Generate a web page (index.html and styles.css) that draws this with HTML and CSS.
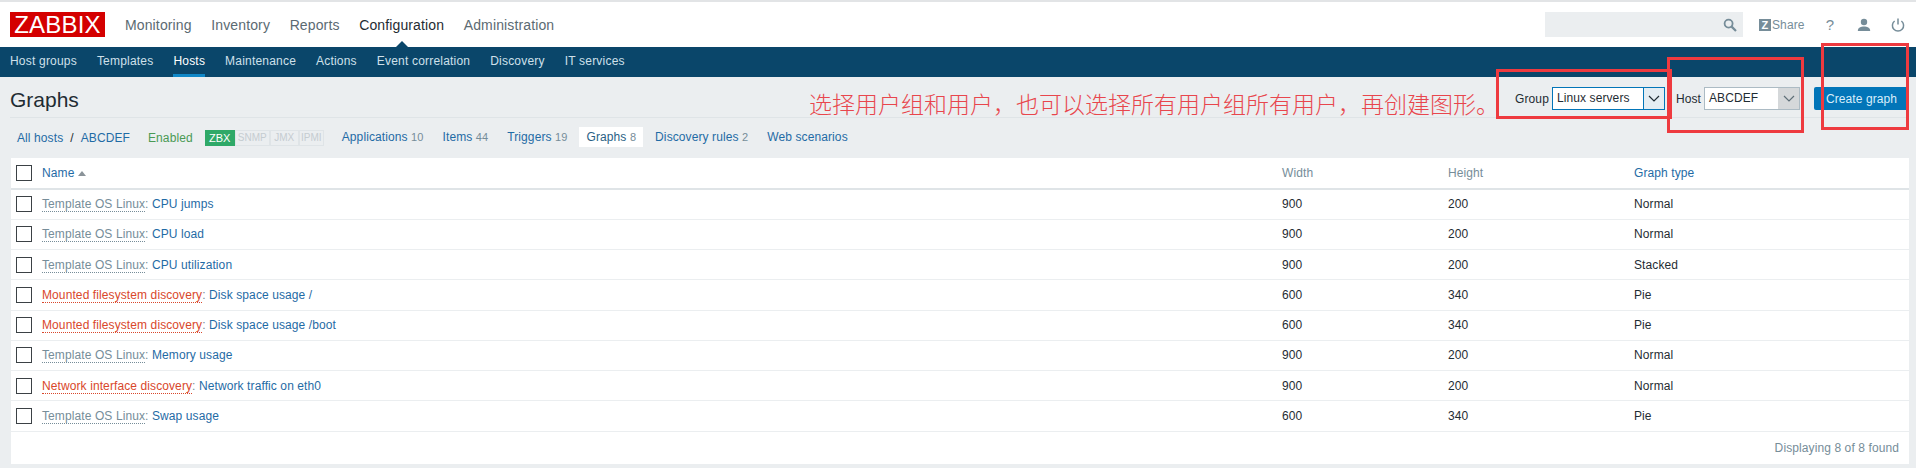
FILE: index.html
```html
<!DOCTYPE html>
<html lang="en">
<head>
<meta charset="utf-8">
<title>Graphs</title>
<link rel="stylesheet" href="styles.css">
</head>
<body>
<header class="topbar">
  <div class="logo">ZABBIX</div>
  <nav class="mainnav">
    <a>Monitoring</a><a>Inventory</a><a>Reports</a><a class="active">Configuration</a><a>Administration</a>
  </nav>
  <div class="search">
    <svg class="search-icon" viewBox="0 0 14 14" width="14" height="14"><circle cx="5.6" cy="5.6" r="4" fill="none" stroke="#768d99" stroke-width="1.8"/><path d="M8.6 8.6 L13 13" stroke="#768d99" stroke-width="2.2" fill="none"/></svg>
  </div>
  <a class="share"><span class="share-z">Z</span>Share</a>
  <span class="help">?</span>
  <svg class="tool user" viewBox="0 0 14 14" width="14" height="14"><circle cx="7" cy="4" r="3.2" fill="#768d99"/><path d="M0.8 13 C0.8 9.2 4 8.4 7 8.4 C10 8.4 13.2 9.2 13.2 13 Z" fill="#768d99"/></svg>
  <svg class="tool power" viewBox="0 0 14 14" width="14" height="14"><path d="M3.6 3 A5.6 5.6 0 1 0 10.4 3" fill="none" stroke="#768d99" stroke-width="1.5"/><path d="M7 0.5 V6.5" stroke="#768d99" stroke-width="1.5"/></svg>
</header>
<nav class="subnav">
  <a>Host groups</a><a>Templates</a><a class="active">Hosts</a><a>Maintenance</a><a>Actions</a><a>Event correlation</a><a>Discovery</a><a>IT services</a>
</nav>
<main>
  <div class="titlebar">
    <h1>Graphs</h1>
    <form class="controls">
      <label>Group</label>
      <div class="select group"><span>Linux servers</span><i class="arrow"><svg viewBox="0 0 12 7" width="12" height="7"><path d="M1 1 L6 6 L11 1" fill="none" stroke="#1f2c33" stroke-width="1.2"/></svg></i></div>
      <label class="host-label">Host</label>
      <div class="select host"><span>ABCDEF</span><i class="arrow"><svg viewBox="0 0 12 7" width="12" height="7"><path d="M1 1 L6 6 L11 1" fill="none" stroke="#5f6f78" stroke-width="1.2"/></svg></i></div>
      <button type="button" class="create">Create graph</button>
    </form>
  </div>
  <div class="hostnav">
    <a>All hosts</a><span class="sep">/</span><a>ABCDEF</a>
    <span class="enabled">Enabled</span>
    <div class="tags"><b class="on">ZBX</b><b class="snmp">SNMP</b><b class="jmx">JMX</b><b class="ipmi">IPMI</b></div>
    <a class="tab">Applications <small>10</small></a>
    <a class="tab">Items <small>44</small></a>
    <a class="tab">Triggers <small>19</small></a>
    <a class="tab current">Graphs <small>8</small></a>
    <a class="tab">Discovery rules <small>2</small></a>
    <a class="tab">Web scenarios</a>
  </div>
  <section class="panel">
    <table>
      <colgroup><col class="c-check"><col class="c-name"><col class="c-width"><col class="c-height"><col></colgroup>
      <thead>
        <tr><th><i class="box"></i></th><th><a>Name</a><i class="sort"></i></th><th>Width</th><th>Height</th><th><a>Graph type</a></th></tr>
      </thead>
      <tbody>
        <tr><td><i class="box"></i></td><td><a class="tpl">Template OS Linux</a>: <a>CPU jumps</a></td><td>900</td><td>200</td><td>Normal</td></tr>
        <tr><td><i class="box"></i></td><td><a class="tpl">Template OS Linux</a>: <a>CPU load</a></td><td>900</td><td>200</td><td>Normal</td></tr>
        <tr><td><i class="box"></i></td><td><a class="tpl">Template OS Linux</a>: <a>CPU utilization</a></td><td>900</td><td>200</td><td>Stacked</td></tr>
        <tr><td><i class="box"></i></td><td><a class="lld">Mounted filesystem discovery</a>: <a>Disk space usage /</a></td><td>600</td><td>340</td><td>Pie</td></tr>
        <tr><td><i class="box"></i></td><td><a class="lld">Mounted filesystem discovery</a>: <a>Disk space usage /boot</a></td><td>600</td><td>340</td><td>Pie</td></tr>
        <tr><td><i class="box"></i></td><td><a class="tpl">Template OS Linux</a>: <a>Memory usage</a></td><td>900</td><td>200</td><td>Normal</td></tr>
        <tr><td><i class="box"></i></td><td><a class="lld">Network interface discovery</a>: <a>Network traffic on eth0</a></td><td>900</td><td>200</td><td>Normal</td></tr>
        <tr><td><i class="box"></i></td><td><a class="tpl">Template OS Linux</a>: <a>Swap usage</a></td><td>600</td><td>340</td><td>Pie</td></tr>
      </tbody>
    </table>
    <div class="paging">Displaying 8 of 8 found</div>
  </section>
</main>
<div class="note">选择用户组和用户，也可以选择所有用户组所有用户，再创建图形。</div>
<div class="mark mark-group"></div>
<div class="mark mark-host"></div>
<div class="mark mark-create"></div>
</body>
</html>
```
FILE: styles.css
```css
* { box-sizing: border-box; }
html, body { margin: 0; height: 468px; overflow: hidden; }
body {
  background: #ebeef0;
  color: #1f2c33;
  font: 12px "Liberation Sans", Arial, sans-serif;
  letter-spacing: 0.1px;
  position: relative;
}
a { color: #1f6ba5; }

.topbar {
  height: 47px;
  background: #fff;
  border-top: 2px solid #e2e4e6;
  display: flex;
  align-items: center;
  padding: 0 11px 0 10px;
}
.logo {
  width: 95px;
  height: 25px;
  background: #d40000;
  color: #fff;
  font-size: 24px;
  line-height: 25px;
  text-align: center;
  letter-spacing: 0.2px;
}
.mainnav { display: flex; margin-left: 20px; flex: 1; gap: 19.6px; font-size: 14px; letter-spacing: 0.13px; }
.mainnav a { color: #5b6a72; position: relative; }
.mainnav a.active { color: #1f2c33; }
.mainnav a.active::after {
  content: "";
  position: absolute;
  left: 50%;
  margin-left: -7px;
  top: 24px;
  border: 7px solid transparent;
  border-top: 0;
  border-bottom-color: #0a466a;
}
.search {
  width: 198px;
  height: 25px;
  background: #ebeef0;
  display: flex;
  align-items: center;
  justify-content: flex-end;
  padding-right: 6px;
}
.share { display: flex; flex: none; align-items: center; margin-left: 16px; color: #768d99; width: 43px; }
.share-z {
  flex: none;
  width: 12px; height: 12px; margin-right: 1px;
  background: #768d99; color: #fff; font-size: 11px; font-weight: bold; line-height: 12px; text-align: center;
}
.help { margin-left: 23px; width: 10px; color: #768d99; font-size: 15px; text-align: center; }
.tool { display: block; flex: none; }
.user { margin-left: 22px; }
.power { margin-left: 20px; }

.subnav {
  height: 30px;
  background: #0a466a;
  display: flex;
  gap: 20px;
  padding-left: 10px;
  letter-spacing: 0.2px;
}
.subnav a { color: #cfe0ea; line-height: 28px; height: 30px; }
.subnav a.active { color: #fff; border-bottom: 3px solid #0f87c7; }

.titlebar {
  height: 41px;
  margin: 0 7px 0 10px;
  border-bottom: 1px solid #dfe4e7;
  display: flex;
  align-items: flex-start;
}
h1 { margin: 10px 0 0; font-size: 21px; font-weight: 400; line-height: 26px; flex: 1; color: #1f2c33; letter-spacing: 0; }
.controls { display: flex; align-items: center; margin-top: 10px; height: 23px; }
.controls label { margin-right: 3px; }
.controls .host-label { margin-left: 11px; margin-right: 3px; }
.select { height: 23px; background: #fff; display: flex; border: 1px solid #acbbc4; }
.select span { flex: 1; line-height: 21px; padding-left: 4px; }
.select .arrow { display: flex; align-items: center; justify-content: center; width: 21px; height: 21px; }
.select.group { width: 113px; border-color: #0275b8; }
.select.group .arrow { background: #e4edf3; border-left: 1px solid #0275b8; }
.select.host { width: 96px; }
.select.host .arrow { background: #d5d8da; }
.create {
  margin-left: 14px;
  width: 95px; height: 23px;
  background: #0275b8; color: #d8eefb; border: 0; border-radius: 2px;
  font: 12px "Liberation Sans", Arial, sans-serif; letter-spacing: 0.1px; padding: 0;
}

.hostnav {
  height: 40px;
  padding-left: 17px;
  display: flex;
  align-items: center;
}
.sep { margin: 0 7px; color: #1f2c33; }
.enabled { color: #4a9a55; margin-left: 18px; }
.tags { display: flex; margin-left: 12px; margin-right: 11px; width: 119px; height: 16px; }
.tags b { flex: none; font-weight: 400; font-size: 10px; letter-spacing: 0; height: 16px; line-height: 14px; text-align: center; border: 1px solid #dfe4e7; color: #c5ccd0; }
.tags b.on { background: #2fa968; border-color: #2fa968; color: #fff; width: 30px; font-size: 11px; }
.tags .snmp { width: 35px; }
.tags .jmx { width: 29px; }
.tags .ipmi { width: 25px; }
.tab { padding: 3px 7px; margin: -2px 5px 0 0; height: 20px; }
.tab small { font-size: 11px; color: #768d99; }
.tab.current { background: #fff; color: #2a5f85; }

.panel { margin: 0 7px 0 11px; background: #fff; height: 306px; }
table { width: 100%; border-collapse: collapse; table-layout: fixed; }
.c-check { width: 31px; }
.c-name { width: 1240px; }
.c-width { width: 166px; }
.c-height { width: 186px; }
th { height: 31px; text-align: left; font-weight: 400; color: #768d99; border-bottom: 2px solid #dfe4e7; padding: 0; }
td { height: 30.25px; border-bottom: 1px solid #ebeef0; padding: 0; }
th:first-child, td:first-child { padding-left: 5px; }
.box { display: block; width: 16px; height: 16px; border: 1px solid #3b4145; background: #fff; }
.sort { display: inline-block; margin-left: 4px; border: 4px solid transparent; border-top: 0; border-bottom: 5px solid #8a9399; vertical-align: 1px; }
.tpl { color: #768d99; border-bottom: 1px dotted #768d99; }
.lld { color: #d9472b; border-bottom: 1px dotted #d9472b; }
td:nth-child(2) { color: #768d99; }
.paging { height: 32px; line-height: 32px; text-align: right; padding-right: 10px; color: #768d99; }

.note {
  position: absolute;
  left: 809px; top: 89px;
  font: 300 23px/28px "Noto Sans CJK SC", sans-serif;
  letter-spacing: 0;
  color: #e8464d;
  white-space: nowrap;
}
.mark { position: absolute; border: 3px solid #ee3a3f; }
.mark-group { left: 1496px; top: 69px; width: 176px; height: 50px; }
.mark-host { left: 1667px; top: 57px; width: 137px; height: 76px; }
.mark-create { left: 1821px; top: 43px; width: 88px; height: 87px; }
```
